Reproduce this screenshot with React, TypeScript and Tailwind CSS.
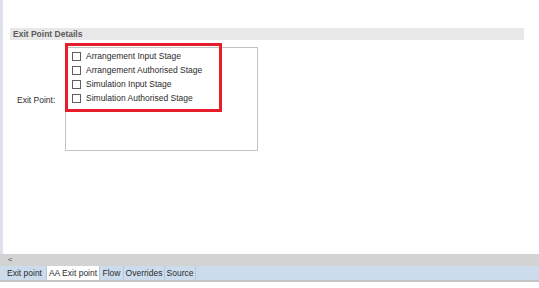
const stages = [
  "Arrangement Input Stage",
  "Arrangement Authorised Stage",
  "Simulation Input Stage",
  "Simulation Authorised Stage",
];

const tabs = [
  { label: "Exit point", w: "w-[44px]", active: false },
  { label: "AA Exit point", w: "w-[53px]", active: true },
  { label: "Flow", w: "w-[24px]", active: false },
  { label: "Overrides", w: "w-[41px]", active: false },
  { label: "Source", w: "w-[31px]", active: false },
];

function Checkbox() {
  return <span className="block w-[9px] h-[9px] border border-[#5f5f5f] bg-white shrink-0" />;
}

export default function App() {
  return (
    <div
      className="w-[539px] h-[288px] bg-white flex flex-col overflow-hidden text-[#2b2b2b]"
      style={{ fontFamily: "'Liberation Sans', Arial, sans-serif" }}
    >
      {/* main panel */}
      <div className="flex-1 border-l-[3px] border-[#dde1ea] pt-[28px] pl-[7px] pr-[15px] relative">
        <div className="h-[12px] bg-[#e8e8e8] pl-[3px] flex items-center text-[8.5px] font-bold text-[#5a5a5a] leading-none">
          Exit Point Details
        </div>

        <div className="flex mt-[7px]">
          <div className="w-[55px] flex items-center pl-[7px] pt-[2px] text-[8.5px] leading-none">Exit Point:</div>
          <div className="relative w-[193px] h-[104px] border border-[#c2c2c2] pt-[1px] pl-[6px]">
            {stages.map((s) => (
              <div key={s} className="h-[14px] flex items-center gap-[5px] text-[8.5px] leading-none">
                <Checkbox />
                <span>{s}</span>
              </div>
            ))}
            {/* red annotation */}
            <div className="absolute left-[-1px] top-[-5px] w-[157px] h-[69px] border-[3px] border-[#e61e2b]" />
          </div>
        </div>
      </div>

      {/* horizontal scrollbar */}
      <div className="h-[12px] bg-[#d3d3d3] flex items-center pl-[8px] text-[8px] leading-none text-[#555]">
        &lt;
      </div>

      {/* tab strip */}
      <div className="h-[14px] bg-[#ccdcec] flex pl-[3px] text-[8.5px] leading-none">
        {tabs.map((t) => (
          <div
            key={t.label}
            className={`${t.w} h-full flex items-center justify-center border-r border-[#b9c7d6] ${
              t.active ? "bg-white" : ""
            }`}
          >
            {t.label}
          </div>
        ))}
      </div>
      <div className="h-[2px] bg-[#c4c4c4]" />
      <div className="h-[6px] bg-white" />
    </div>
  );
}
